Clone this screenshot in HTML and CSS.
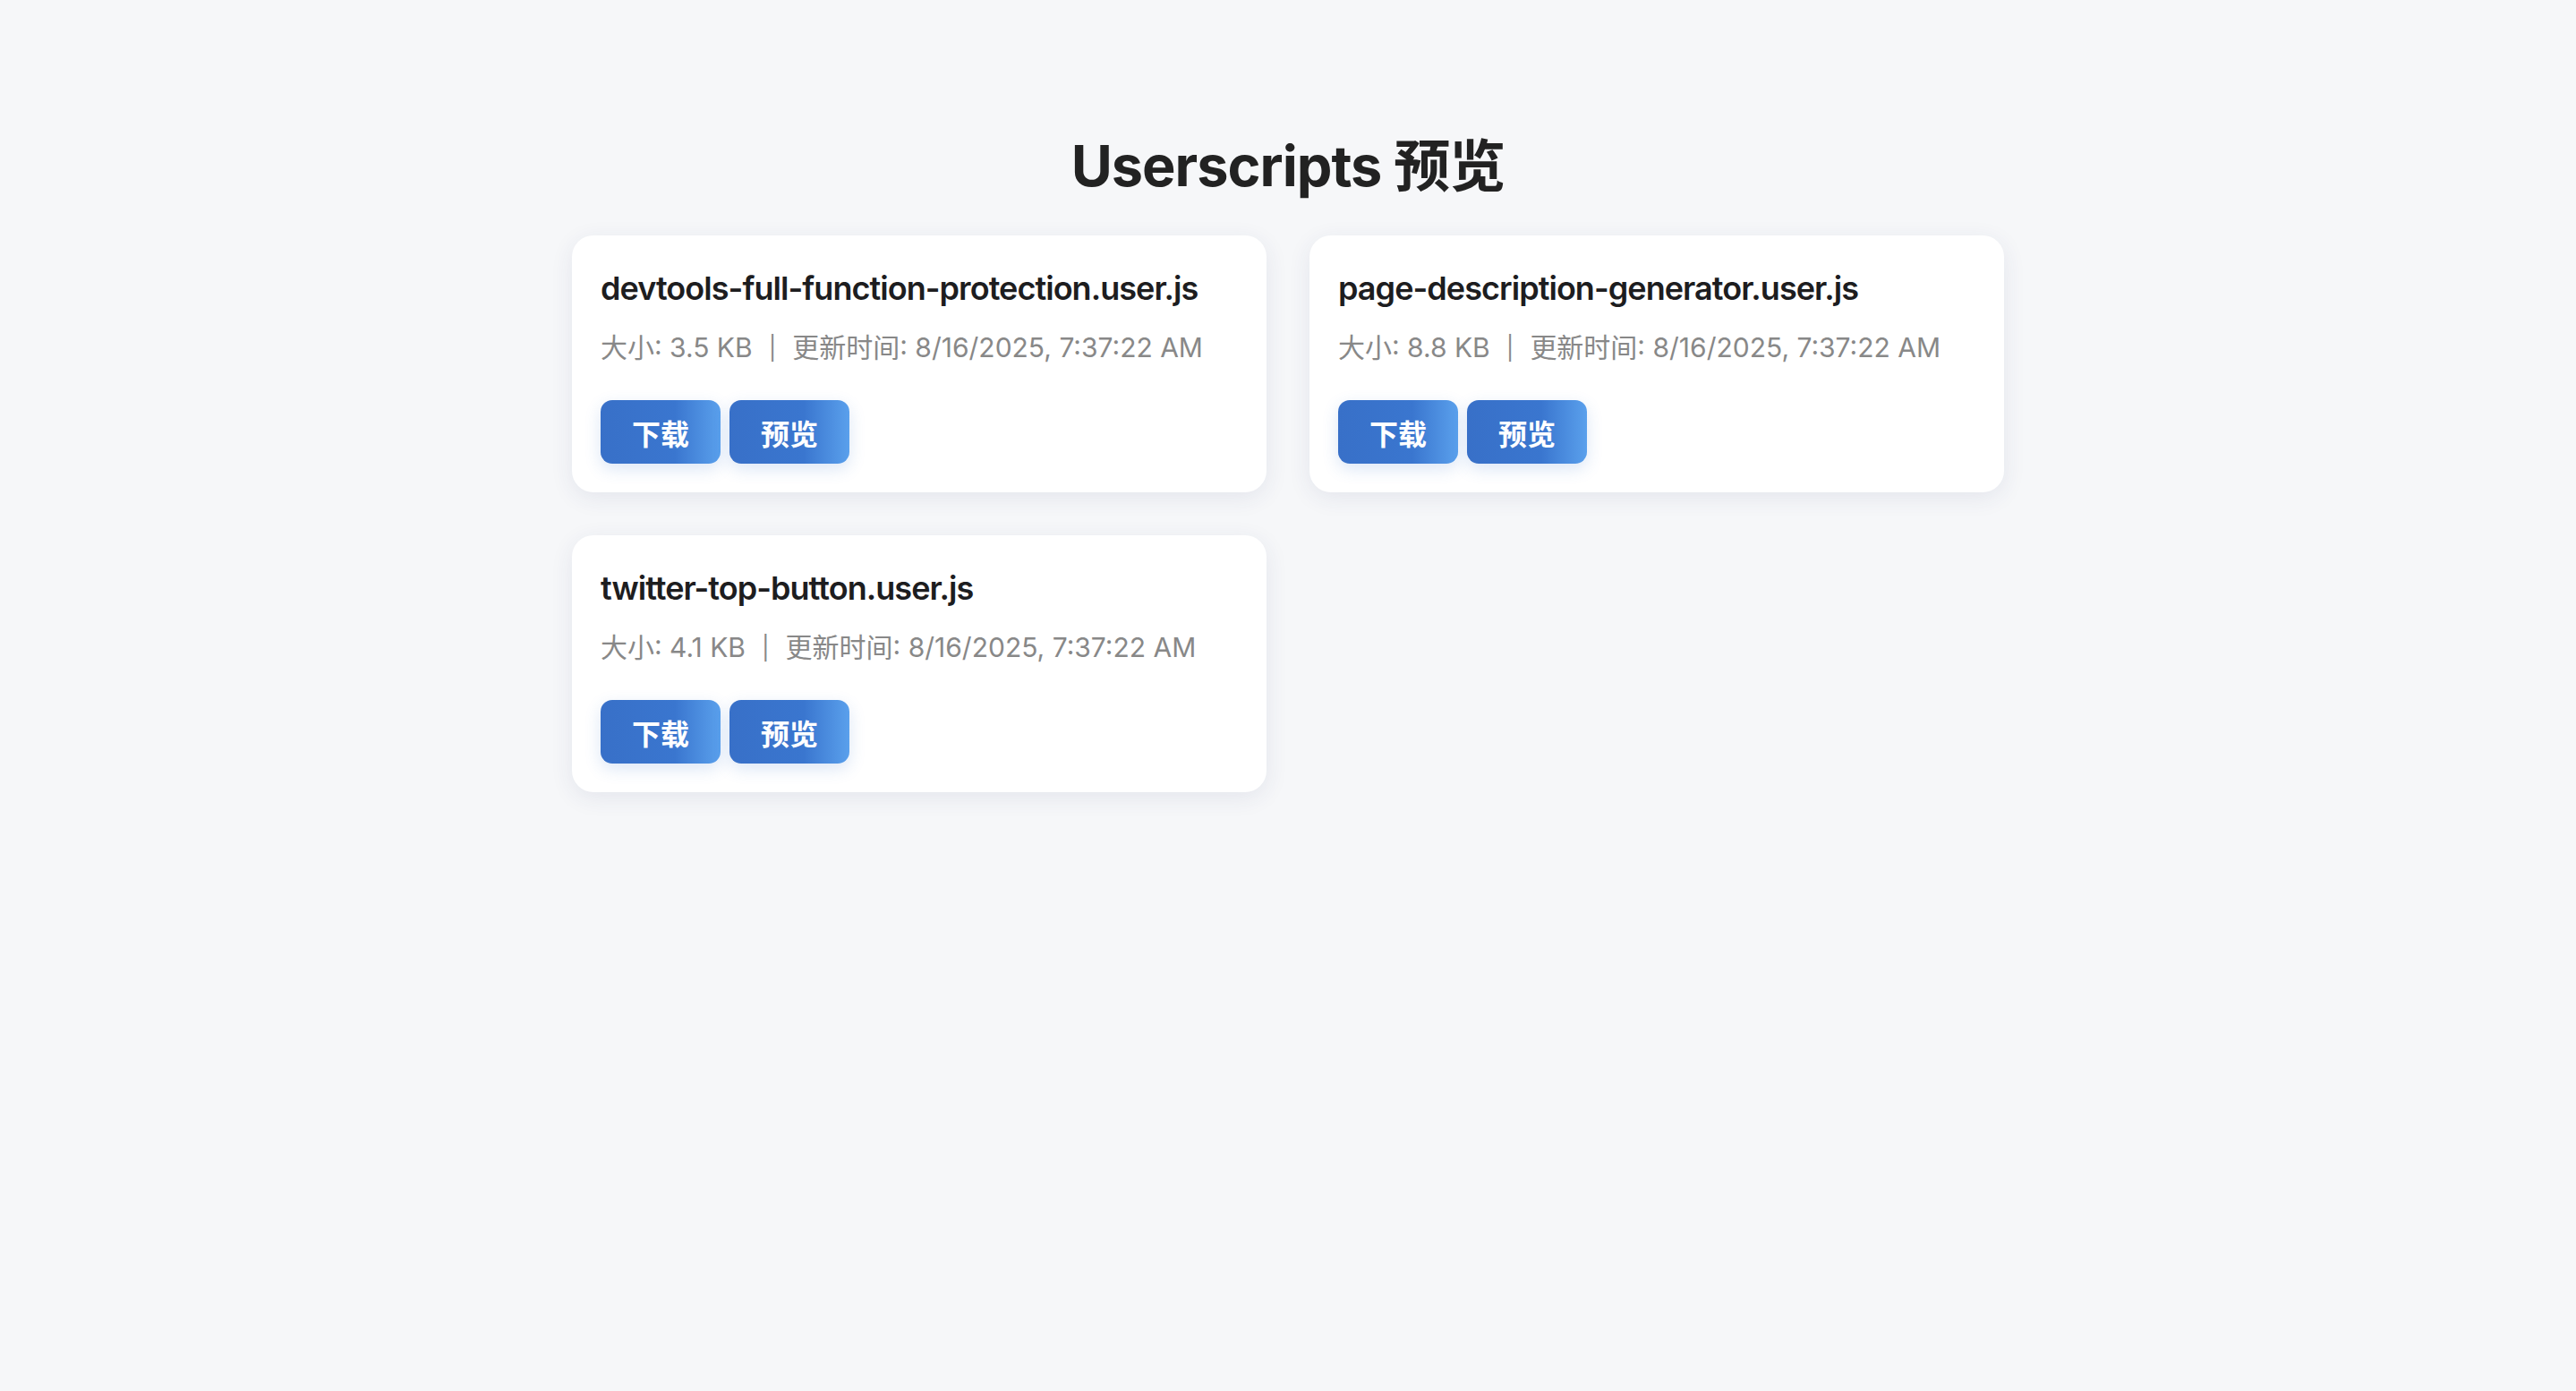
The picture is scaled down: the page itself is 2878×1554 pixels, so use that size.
FILE: index.html
```html
<!DOCTYPE html>
<html lang="zh-CN">
<head>
<meta charset="utf-8">
<title>Userscripts 预览</title>
<link rel="stylesheet" href="styles.css">
</head>
<body>
<main class="page">
  <h1 class="page-title">Userscripts 预览</h1>
  <div class="grid">
    <div class="card">
      <div class="card-title">devtools-full-function-protection.user.js</div>
      <div class="card-meta">大小: 3.5 KB<span class="sep">|</span>更新时间: 8/16/2025, 7:37:22 AM</div>
      <div class="actions">
        <a class="btn">下载</a>
        <a class="btn">预览</a>
      </div>
    </div>
    <div class="card">
      <div class="card-title">page-description-generator.user.js</div>
      <div class="card-meta">大小: 8.8 KB<span class="sep">|</span>更新时间: 8/16/2025, 7:37:22 AM</div>
      <div class="actions">
        <a class="btn">下载</a>
        <a class="btn">预览</a>
      </div>
    </div>
    <div class="card">
      <div class="card-title">twitter-top-button.user.js</div>
      <div class="card-meta">大小: 4.1 KB<span class="sep">|</span>更新时间: 8/16/2025, 7:37:22 AM</div>
      <div class="actions">
        <a class="btn">下载</a>
        <a class="btn">预览</a>
      </div>
    </div>
  </div>
</main>
</body>
</html>
```

FILE: styles.css
```css
html, body {
  margin: 0;
  padding: 0;
  background: #f6f7f9;
}
body {
  font-family: Inter, "Noto Sans CJK SC", sans-serif;
  color: #1d1d1f;
}
.page {
  max-width: 1600px;
  margin: 0 auto;
  padding: 147px 0 80px;
}
.page-title {
  margin: 0 0 39px;
  text-align: center;
  font-size: 63px;
  line-height: 77px;
  font-weight: 700;
  letter-spacing: -1px;
  color: #222;
}
.grid {
  display: grid;
  grid-template-columns: 1fr 1fr;
  gap: 48px;
}
.card {
  background: #fff;
  border-radius: 24px;
  padding: 38px 32px 32px;
  box-shadow: 0 6px 26px rgba(40, 60, 110, 0.09);
}
.card-title {
  font-size: 36px;
  line-height: 43px;
  font-weight: 600;
  color: #1d1d1f;
  letter-spacing: -0.95px;
}
.card-meta {
  margin-top: 24px;
  font-size: 30px;
  line-height: 40px;
  color: #888;
}
.sep {
  display: inline-block;
  margin: 0 18px;
  font-size: 26px;
  vertical-align: 1px;
}
.actions {
  display: flex;
  gap: 10px;
  margin-top: 38px;
}
.btn {
  display: inline-flex;
  align-items: center;
  justify-content: center;
  width: 134px;
  height: 71px;
  box-sizing: border-box;
  border-radius: 13px;
  background: linear-gradient(90deg, #3870c8 0%, #3a76cf 62%, #5aa0ec 100%);
  color: #fff;
  font-size: 32px;
  font-weight: 700;
  text-decoration: none;
  box-shadow: 0 6px 18px rgba(58, 118, 207, 0.18);
}
```
